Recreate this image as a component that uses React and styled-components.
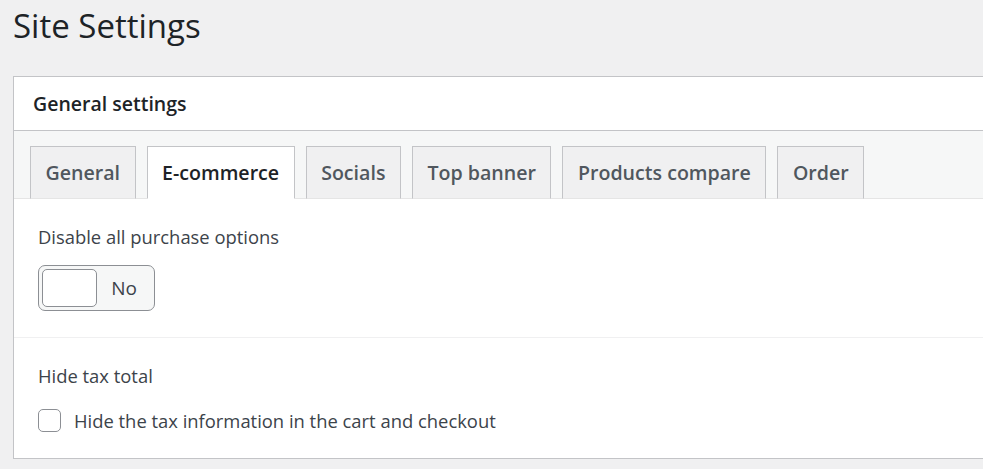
import { useState } from 'react'
import styled, { createGlobalStyle } from 'styled-components'

const GlobalStyle = createGlobalStyle`
  html, body {
    margin: 0;
    padding: 0;
    background: #f0f0f1;
    font-family: "Open Sans", "Noto Sans", sans-serif;
    color: #1d2327;
    overflow: hidden;
  }
`

const tabs = ['General', 'E-commerce', 'Socials', 'Top banner', 'Products compare', 'Order']

const App = () => {
  const [active, setActive] = useState('E-commerce')
  const [purchaseOff, setPurchaseOff] = useState(false)
  const [hideTax, setHideTax] = useState(false)

  return (
    <Page>
      <GlobalStyle />
      <Title>Site Settings</Title>
      <Card>
        <CardHeader>General settings</CardHeader>
        <TabBar>
          {tabs.map((tab) => (
            <Tab key={tab} $active={tab === active} onClick={() => setActive(tab)}>
              {tab}
            </Tab>
          ))}
        </TabBar>
        <Section>
          <FieldLabel $gap="14px">Disable all purchase options</FieldLabel>
          <Toggle type="button" onClick={() => setPurchaseOff(!purchaseOff)}>
            <ToggleKnob $on={purchaseOff} />
            <ToggleText>{purchaseOff ? 'Yes' : 'No'}</ToggleText>
          </Toggle>
        </Section>
        <Section $last>
          <FieldLabel $gap="18px">Hide tax total</FieldLabel>
          <CheckRow>
            <CheckBox type="checkbox" checked={hideTax} onChange={() => setHideTax(!hideTax)} />
            Hide the tax information in the cart and checkout
          </CheckRow>
        </Section>
      </Card>
    </Page>
  )
}

const Page = styled.div`
  padding: 0 0 0 13px;
  width: 1100px;
`

const Title = styled.h1`
  margin: 0;
  padding: 4px 0 0;
  height: 72px;
  font-size: 33px;
  font-weight: 400;
  line-height: 44px;
  color: #1d2327;
`

const Card = styled.div`
  background: #fff;
  border: 1px solid #c3c4c7;
`

const CardHeader = styled.div`
  height: 53px;
  padding: 0 19px;
  display: flex;
  align-items: center;
  font-size: 19.5px;
  font-weight: 600;
  border-bottom: 1px solid #c3c4c7;
`

const TabBar = styled.div`
  display: flex;
  gap: 11px;
  padding: 15px 16px 0;
  background: #f6f7f7;
  border-bottom: 1px solid #e5e5e5;
  height: 52px;
`

const Tab = styled.button`
  margin-bottom: -1px;
  padding: 0 14.5px;
  font-family: inherit;
  font-size: 19.6px;
  font-weight: 600;
  color: ${(p) => (p.$active ? '#1d2327' : '#50575e')};
  background: ${(p) => (p.$active ? '#fff' : '#f0f0f1')};
  border: 1px solid #c3c4c7;
  border-bottom: 1px solid ${(p) => (p.$active ? '#fff' : '#e5e5e5')};
  cursor: pointer;
`

const Section = styled.div`
  padding: 24px 24px ${(p) => (p.$last ? '25px' : '26px')};
  border-bottom: ${(p) => (p.$last ? 'none' : '1px solid #f0f0f1')};
`

const FieldLabel = styled.div`
  font-size: 18.4px;
  line-height: 28px;
  color: #3c434a;
  margin-bottom: ${(p) => p.$gap};
`

const Toggle = styled.button`
  display: flex;
  align-items: center;
  width: 117px;
  height: 46px;
  padding: 3px;
  border: 1px solid #8c8f94;
  border-radius: 7px;
  background: #f6f7f7;
  font-family: inherit;
  cursor: pointer;
`

const ToggleKnob = styled.span`
  width: 55px;
  height: 38px;
  box-sizing: border-box;
  border: 1px solid #8c8f94;
  border-radius: 5px;
  background: ${(p) => (p.$on ? '#2271b1' : '#fff')};
`

const ToggleText = styled.span`
  flex: 1;
  text-align: center;
  font-size: 19px;
  color: #3c434a;
`

const CheckRow = styled.label`
  display: flex;
  align-items: center;
  gap: 13px;
  font-size: 18.4px;
  color: #3c434a;
  cursor: pointer;
`

const CheckBox = styled.input`
  appearance: none;
  margin: 0;
  width: 23px;
  height: 23px;
  border: 1px solid #8c8f94;
  border-radius: 5px;
  background: #fff;
  cursor: pointer;

  &:checked {
    background: #2271b1;
  }
`

export default App
